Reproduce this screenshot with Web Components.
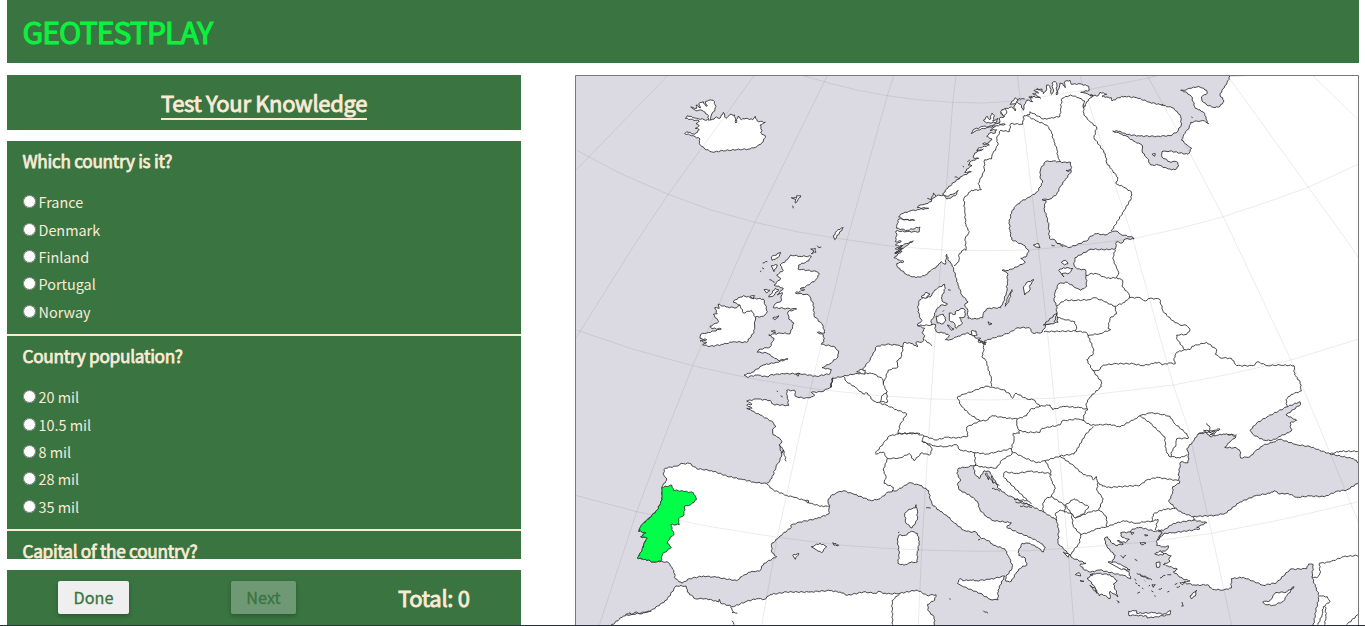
<!DOCTYPE html>
<html lang="en">
<head>
<meta charset="utf-8">
<title>GeoTestPlay</title>
<style>
html,body{margin:0;background:#fff}
body{height:626px;overflow:hidden;font-family:"Noto Sans CJK SC","Noto Sans",sans-serif;--green:#397441;--cream:#faebd7;color:#faebd7}
</style>
</head>
<body>
<geo-app></geo-app>
<script>
const define = (name, html, setup) => customElements.define(name, class extends HTMLElement {
  constructor() {
    super();
    this.attachShadow({ mode: 'open' }).innerHTML = html;
  }
  connectedCallback() { if (setup) setup(this, this.shadowRoot); }
});

define('geo-header', `<style>
:host{display:flex;align-items:center;height:63px;padding:0 15.5px;background:var(--green);box-sizing:border-box}
h1{margin:0;padding-bottom:2px;font-size:30.1px;line-height:40px;font-weight:400;letter-spacing:-.95px;color:#0bf13e;-webkit-text-stroke:1.1px #0bf13e}
</style><h1><slot></slot></h1>`);

define('geo-title', `<style>
:host{display:flex;justify-content:center;align-items:flex-start;height:55px;background:var(--green);box-sizing:border-box;padding-top:12px}
h2{margin:0;height:31px;line-height:30px;border-bottom:2px solid var(--cream);font-size:22px;letter-spacing:-.33px;font-weight:400;-webkit-text-stroke:.85px var(--cream);white-space:nowrap}
</style><h2><slot></slot></h2>`);

define('geo-option', `<style>
:host{display:block;height:27.4px}
label{display:flex;align-items:center;height:27.4px;font-size:14.4px;line-height:25px}
input{margin:0 3px 2px 0;width:13px;height:13px}
span{padding-bottom:2px}
</style><label><input type="radio"><span><slot></slot></span></label>`);

define('geo-question', `<style>
:host{display:block;box-sizing:border-box;height:195px;padding:6px 16px 0 15.5px;border-bottom:2px solid var(--cream)}
h3{margin:0 0 15px;font-size:17.2px;letter-spacing:-.27px;line-height:27px;font-weight:400;-webkit-text-stroke:.75px var(--cream);white-space:nowrap}
</style><h3></h3><slot></slot>`, (el, root) => { root.querySelector('h3').textContent = el.getAttribute('heading'); });

define('geo-button', `<style>
:host{display:block}
button{display:block;height:33px;padding:0 15px;border:0;border-radius:2px;background:#efefef;color:#397441;font:16.2px/33px "Noto Sans CJK SC",sans-serif;box-shadow:0 2px 4px rgba(0,0,0,.25);-webkit-text-stroke:.3px #397441;box-sizing:border-box;width:100%}
:host([disabled]) button{background:rgba(239,239,239,.3)}
</style><button><slot></slot></button>`);

define('geo-footer', `<style>
:host{display:grid;grid-template-columns:71px 65px auto;column-gap:102px;padding:11px 0 0 51px;height:55px;box-sizing:border-box;background:var(--green)}
strong{font-size:22px;letter-spacing:-.3px;line-height:33px;font-weight:400;-webkit-text-stroke:.85px var(--cream);white-space:nowrap}
</style><geo-button>Done</geo-button><geo-button disabled>Next</geo-button><strong><slot></slot></strong>`);

/* Map data. Capital letters pick a map sheet; coordinates are thirds of a pixel inside it. */
const SHEETS = { A:[570,65], B:[830,65], C:[1090,65], D:[570,245], E:[830,245], F:[1090,245], G:[570,430], H:[830,430], I:[1090,430] };

const MAINLAND = `C 420,32 410,58 398,72 390,90 402,108 390,124 375,128 350,120 336,108 334,96 352,84 350,76 330,66 310,66 290,74 272,76 290,82 304,94 316,130 330,134 344,146 348,162 356,176 344,168 320,168 302,172 298,186 285,205 274,225 292,240 305,250 294,268 270,264 240,258 216,260 216,276 238,290 260,290 267,302 255,314 235,312 205,300 182,300 172,280 158,264 156,240 130,228 110,214 90,206 68,198 90,199 108,208 150,213 200,214 240,212 262,200 274,180 272,155 262,140 246,128 215,120 180,112 140,98 105,94 85,98 66,108 64,98 50,96 36,94 50,88 30,82 25,92 0,92
B 790,92 762,84 752,82 778,76 776,64 750,56 724,58 720,46 706,48 702,54 706,68 698,56 690,54 686,72 680,90 680,54 676,50 666,54 670,80 664,88 660,64 650,60 648,78 640,86 636,72 612,76 626,84 608,86 628,96 632,100 612,94 598,96 608,110 590,106 582,120 580,136 572,118 562,112 552,122 556,138 545,126 530,130 516,134 512,146 524,154 508,160 510,172 496,184 480,196 500,194 496,204 478,204 470,214 486,222 476,234 458,236 478,240 444,250 440,258 460,252 434,264 430,278 446,280 424,288 414,300 426,302 410,312 404,322 424,320 396,334 372,352 350,372 338,388 350,394 372,386 384,376 380,388 366,396 350,402 340,390 320,392 308,400 304,410 288,416 270,420 262,428 296,430 262,434 240,438 216,446 206,456 224,464 254,466 206,462 202,476 200,490 232,496 270,486 268,500 228,500 198,498 200,512 196,530 214,528 196,540 208,544 250,528 226,544 206,560 196,566
E 216,2 196,12 218,10 194,24 216,18 192,38 204,44 222,50 200,56 204,68 232,90 258,98 284,92 304,76 324,62 334,50 346,58 350,28 356,48 366,58 376,90 384,120 396,150 414,170 404,180 412,192 414,220 440,222 458,218 462,200 474,190 512,188 520,170 530,140 532,110 532,84 516,76 536,76 560,66 586,52 572,40 588,36 596,20
B 596,556 580,540 562,532 545,524 540,500 538,470 545,440 556,424 575,408 600,396 622,380 638,352 630,335 632,312 646,290 670,288 700,292 722,292 724,318 706,344 690,366 680,388 660,402 636,404 648,406 642,430 650,456 656,480 658,520 676,526 684,536 700,540 714,548 740,540 775,524 780,514
C 20,506 45,510 62,502 78,498 92,508 130,518 132,522 106,522 96,534 80,530 76,552 F 40,14 0,12
E 780,14 735,38 732,60 742,72 766,74 768,90 770,124 752,136 740,130 712,112 686,116 676,140 672,165 680,184 680,214 664,236 648,238 642,252 632,264 608,264 598,248 564,248 540,262 520,270 462,288 468,298 444,290 452,280 440,280 428,270 410,264 380,276 360,284 346,284 358,272 344,264 322,262 314,250 316,238 304,240 304,226 312,214 318,196 332,180 350,180 352,176 336,168 336,154 346,130 344,118 322,130 312,140 300,156 276,160 266,170 264,190 268,214 276,226 262,240 272,244 284,250 276,262 284,272 278,290 258,292 262,306 248,296 222,292 218,304 198,300 170,298 140,304 128,330 116,350 98,372 104,384 76,386 40,394 8,400 2,428
D 788,398 782,426 756,440 724,442 734,450 720,458 704,460 676,454 674,436 650,436 652,456 656,482 610,478 600,466 560,462 530,468 546,478 530,480 546,490 530,490 546,498 570,510 604,528 618,544 608,552 610,570
G 624,22 636,34 628,44 640,60 630,90 618,110 606,145 594,158 578,160 550,156 515,148 470,138 425,122 380,116 358,100 330,102 322,108 286,114 280,130 290,150 276,170 276,210 262,240 240,262 214,286 206,304 226,302 238,296 228,308 212,320 232,324 222,340 216,362 202,384 226,388 250,396 274,394 296,398 306,412 314,432 316,446 336,460 358,446 400,438 440,442 500,452 520,436 546,424 568,424 582,400 620,380 606,368 604,344 630,318 664,292 662,286 690,276 740,266 776,252 778,232 774,210 782,198 800,188
H 40,182 70,192 124,212 150,206 175,186 200,182 238,158 270,166 296,182 300,206 306,222 330,244 350,256 370,276 400,300 420,306 438,306 450,322 476,332 490,346 524,356 536,380 546,402 546,416 528,440 528,454 544,454 560,426 578,408 590,406 586,384 566,376 566,362 576,340 600,340 622,352 640,366 646,352 628,336 600,322 560,306 530,292 544,278 490,272 468,258 450,240 442,214 420,196 388,180 382,164 392,150 380,130 386,114 410,112 438,104 430,112 436,134 448,146 462,122 480,126 488,142 498,158 506,176 530,194 552,204 600,226 640,246 680,270 686,300 684,340 700,356 728,384 768,400 752,402 750,406 764,420 782,426
I 30,420 70,430 100,436 122,446 116,424 90,412 66,396 76,376 60,362 46,342 44,324 52,320 62,336 76,346 100,342 82,332 106,338 118,328 96,322 92,308 120,306 126,298 150,292 172,298 196,304 220,304 206,322 202,330 200,346 220,350 236,348 230,360 214,366 244,378 236,388 240,394 220,404 234,408 262,418 250,426 264,436 280,448 300,452 280,458 318,466 352,464 368,478 400,480 424,474 424,446 460,442 520,466 560,458 600,418 650,416 656,402 670,404 666,440 676,470 688,498 678,540 670,588 810,588 C 810,28`;

const AFRICA = `G 122,588 160,558 240,544 290,510 318,468 348,468 352,486 376,506 410,506 446,516 448,508 452,520 490,530 530,514 560,506 584,508 600,494 650,486 720,486 770,482 H 0,482 30,486 52,496 100,486 140,490 144,484 170,492 210,490 262,480 290,496 318,494 314,510 292,524 296,544 312,560 314,588`;

const PORTUGAL = `G 276,172 306,166 310,180 340,184 370,188 380,208 362,224 344,228 342,256 326,266 328,284 302,284 312,314 300,322 292,340 304,352 278,372 272,394 250,396 226,388 202,384 216,362 222,340 232,324 212,320 228,308 206,304 214,286 240,262 262,240 276,210`;

const SEAS = `I 290,56 310,34 324,12 350,8 360,20 380,16 400,12 420,14 438,20 420,36 404,52 440,54 450,64 452,84 480,80 496,64 520,46 550,36 570,28 620,44 660,50 720,72 790,86 810,102 810,156 770,180 740,184 704,200 660,198 620,202 594,190 570,192 552,182 540,190 500,196 450,216 406,250 375,256 310,260 280,250 262,240 236,214 248,190 248,170 268,160 266,130 272,96 294,98 296,70
I 205,300 220,302 250,280 310,270 350,278 320,292 330,296 310,300 250,308 222,310 204,330 216,306
F 480,556 500,534 530,516 590,486 630,470 632,478 588,510 620,526 600,534 604,558 I 596,8 566,20 556,28 540,32 520,30 490,14
E 640,240 680,204 684,232 664,236
B 708,316 722,314 716,320`;

const ISLANDS = `A 362,126 380,130 378,120 392,128 386,116 400,110 408,124 412,122 406,110 416,106 430,106 438,124 434,138 428,142 424,150 422,166 440,156 450,160 460,142 468,160 480,148 494,150 498,174 504,154 514,164 528,160 548,164 556,154 562,168 586,172 570,180 576,196 572,204 586,212 580,230 562,244 540,252 500,254 450,258 430,262 404,252 388,236 390,222 370,212 344,206 350,200 374,208 388,194 376,190 388,182 378,176 388,168 346,160 352,152 380,160 402,164 418,166 412,148 396,136 376,136
D 662,30 690,34 724,34 716,48 686,60 684,72 740,80 748,88 736,106 708,124 690,132 704,134 676,144 716,150 730,176 732,212 758,240 764,264 742,262 760,270 762,290 754,298 790,304 806,318 804,336 780,356 756,368 784,374 780,386 740,394 690,386 640,386 600,390 594,396 560,390 530,396 522,390 546,382 580,360 620,352 654,342 624,346 610,336 590,324 562,322 566,314 600,306 612,280 596,270 630,264 660,266 672,234 656,222 654,200 680,192 640,190 610,188 616,176 632,170 636,142 622,150 640,130 612,120 632,100 620,90 640,76 630,60 652,44
D 444,178 468,186 500,188 510,180 490,172 496,164 520,152 550,160 580,162 586,180 592,200 580,214 556,216 554,240 552,262 530,292 490,290 460,298 420,304 398,300 410,292 390,288 410,284 390,280 392,268 410,264 454,252 424,250 420,244 446,230 430,208 442,206 434,188 448,190
H 258,224 262,240 262,270 246,294 228,280 224,250 236,238 256,234
H 206,316 226,316 244,304 262,310 268,334 262,370 262,396 240,398 222,406 204,400 208,370 202,330
H 382,460 390,446 398,452 420,450 440,452 480,448 524,438 504,480 504,510 480,508 450,490 400,470
E 358,204 376,208 376,200 396,190 406,196 404,216 388,218 398,234 378,250 374,236 358,226
E 318,214 340,208 348,226 340,236 322,234
E 352,240 372,252 364,256
E 580,126 590,112 612,104 600,120 600,134 584,150
E 546,134 536,170 526,184 532,160
E 686,76 700,68 728,70 718,84 696,86 702,96
E 694,52 706,46 714,56 704,60
E 474,230 486,236 478,240
E 424,258 438,258 442,270 426,272
E 274,156 288,142 300,148 286,160
E 106,376 90,374 80,380 104,388
I 116,544 140,542 140,550 190,548 222,552 242,542 240,554 200,560 172,564 170,558 140,556 116,556
I 518,516 540,512 556,488 590,486 612,470 590,498 580,514 550,526 526,524
I 300,498 320,480 316,498 304,506
I 54,396 76,396 100,408 120,420 90,416
I 194,372 212,362 222,372 206,376
I 198,398 210,396 208,412 200,412
I 150,338 168,340 154,344
I 122,306 132,308 126,314
I 164,314 174,316 166,318
I 0,434 20,430 60,434 82,452 70,462 84,500 60,484 60,506 36,492 28,498 18,478 0,466 H 800,490 794,470 772,444 790,434
G 724,350 750,340 770,350 754,368 740,360
G 788,338 806,346 792,346
G 668,376 686,370 676,388
A 664,398 680,400 680,392 692,392 684,404 676,414 678,404
B 10,512 24,494 40,488 28,504 14,524
D 722,12 736,10 738,22 724,26 732,18
D 604,36 632,22 624,38 606,46
D 604,62 622,60 612,80
D 582,134 600,136 590,144
D 596,156 616,130 626,134 608,154
D 608,220 626,212 616,224
D 604,258 614,256 616,264
D 540,154 554,152 550,162
D 678,388 688,386 684,394
B 424,206 430,194 460,184 476,186 500,176 526,178 500,182 470,188 440,196
B 460,166 472,154 480,164 486,144 494,152 488,168 504,160 500,172 470,174
B 540,118 556,98 566,104 556,116
B 512,140 526,130 530,144 520,152
B 610,540 626,536 630,548 618,546
H 700,366 718,374 714,382
H 736,434 748,428 752,438
H 750,452 762,454
C 186,268 196,266 194,274
I 270,458 284,456 276,464
I 186,464 196,464 190,472`;

const BORDERS = `B 788,92 770,110 766,124 760,128 764,108 745,98 722,90 696,100 692,130 690,154 660,160 640,162 600,140 598,150 582,152 578,178 542,176 538,200 512,196 500,220 504,240 486,270 484,282 464,284 462,320 444,356 454,374 424,376 402,400 404,440 408,484 418,500 406,520 408,556 E 404,12 388,26 386,50 372,62
B 590,152 620,168 650,180 664,200 672,230 680,250 684,276 692,290
B 760,118 762,150 780,170 C 20,186 12,218 46,266 50,294 64,312 84,338 78,356 100,366 124,380 124,400 104,434 64,498
F 76,14 68,40 80,70 86,82 80,98 98,106 96,124 116,146 118,158
E 768,92 780,86 F 20,86 50,100 80,98
E 680,182 704,166 740,166 780,164 F 14,158 40,168 74,184
F 74,184 104,172 118,158
F 74,184 80,206 60,220 54,250 62,254 30,266 0,270 E 774,272
E 682,218 700,222 734,230 740,250 736,258
E 642,260 736,258 768,262 774,272 790,310 790,326 770,344 788,376
F 8,376 34,410 34,425 0,456 E 768,476 772,492
F 8,376 26,376 40,360 80,356 130,356 156,362 190,356 206,352 216,360 236,354 256,356 252,340 260,322 284,314
F 118,158 150,158 166,168 180,160 208,162 220,200 246,226 270,240 288,240 300,254 290,268 260,270 262,284 284,314
F 284,314 300,314 306,304 350,292 380,314 376,328 390,338 424,340 440,362 490,362 504,350 530,362 570,360 612,362 614,390 630,410 634,438 604,448 588,464 592,486
E 462,296 460,320 456,334 470,350 474,370 484,400 484,424
E 382,456 400,448 430,438 466,424 486,426 520,434 540,448 548,460 558,444 590,462 610,464 630,484
E 382,456 394,484 420,508 450,528 470,526 486,512 520,518 562,522 590,512 600,494 630,484 660,480 668,494 700,484 750,488 774,494
E 562,522 560,540 568,556 590,562 630,562 636,550 690,540 696,528 740,522 758,526 766,500 774,494
E 450,528 410,546 412,568 H 414,18 380,24 350,22 318,30 282,18
E 758,526 780,540 F 20,540 60,538 90,546 134,522 150,512 180,504 206,506 240,514 252,534 290,566
F 150,512 180,534 216,568 I 224,20 228,60 236,78 270,84 292,74
I 290,10 296,24 260,26 258,44 244,66 242,80
I 36,168 60,172 150,166 170,150 200,142 266,152
E 790,544 766,570 H 740,60 732,72
H 690,78 732,108 760,134 786,140 790,150 I 20,140 22,156 38,168
I 24,158 20,180 40,206 26,240 40,250 50,264 50,290
I 50,290 80,280 100,272 140,280 170,274 186,274 190,252 220,238 256,236
I 186,274 204,268 196,300
I 50,290 20,296 0,306 H 752,314
H 706,226 732,206 776,230 760,252 736,264 724,250 706,226
H 680,270 676,250 690,240 704,246 724,250 730,290 752,314 748,340 726,366 720,376
H 736,264 780,246 I 26,240
H 640,246 638,220 652,202 664,200 706,226 704,246
H 604,222 560,180 520,140 524,126 560,130 600,124 658,130 664,150 676,176 664,200
H 646,92 660,118 664,136
H 546,64 580,82 620,98 646,92 690,78 732,72
H 436,106 434,68 470,72 500,66 544,56 546,72 516,90 500,114 460,112 436,106
H 434,68 390,60 380,44 350,50 316,48 290,40 276,34
H 544,56 552,30 550,10 568,10 568,0
H 136,70 160,40 178,18 204,12 256,10 282,18 276,34 300,46 306,60 298,76 276,68 252,92 238,70 220,80 206,84 172,86 160,66 136,72
H 172,86 160,120 168,140 162,160 190,172 186,184
E 168,480 200,494 230,506 210,540 204,566 240,564 270,566
E 204,566 H 204,12
E 40,394 50,410 80,430 98,446 112,444 130,468 168,480
E 104,384 130,386 158,402 160,420 172,440 158,450 150,470 172,472 170,440
E 220,304 212,340 200,348 204,366 174,376 166,400 160,416
E 262,242 304,240
E 284,284 306,302
G 590,162 610,180 650,196 672,202 700,210 720,220 760,230 778,228
G 706,212 716,212 714,220
I 720,72 750,64 808,64
I 666,440 680,444 690,430 688,400 720,396 760,380 808,376
I 690,498 712,500 720,514 700,530 696,556 684,584
I 706,530 708,560 704,584
I 770,584 806,552
D 510,180 520,204 544,196 556,216
H 210,490 186,512 188,584
G 480,530 490,545 486,548 502,550
G 486,572 492,584
F 350,535 360,548 355,560 372,556 390,552 370,566 350,556 325,568
F 414,568 440,570
I 340,0 350,8 376,4 360,14 374,14
I 310,260 312,272
H 552,208 590,212
H 556,216 600,224
H 570,228 606,232
H 486,176 500,178 510,184
H 466,130 476,150 470,128
H 478,140 490,160 484,138
H 486,154 508,166
H 288,234 302,234
H 460,542 474,550
H 358,506 362,508
H 204,308 208,306
H 444,330 450,328
G 628,44 634,70 640,60 648,94
G 166,554 180,548 184,554 200,546 210,552 226,546 244,544
D 620,438 624,440
D 632,452 638,456
D 578,54 592,50
D 576,68 582,72
D 598,104 614,112
D 742,2 746,8 754,6
D 570,78 574,80
A 668,422 670,430
B 412,290 420,284
B 398,304 402,306
B 374,336 390,340
B 292,400 304,404 310,384 318,394
B 566,100 584,102
B 596,96 608,98
B 620,70 636,80
B 664,540 674,542
B 678,532 700,544
C 214,120 220,118
C 304,156 308,158
E 354,134 362,136
E 338,200 342,196
E 444,282 464,296
E 450,290 470,292
E 672,232 682,206
I 92,376 100,384 108,376
I 134,388 142,392
I 140,430 176,444
I 150,436 186,450
I 134,446 138,452
I 164,452 166,454
I 136,458 142,462
I 144,466 150,468
I 176,468 180,466
I 184,482 190,486
I 142,490 150,486
I 194,496 196,500
I 206,478 216,474
I 232,486 238,484
I 210,444 226,436
I 232,434 244,434
I 254,464 262,460
I 260,472 270,468
I 276,516 280,528 274,528
I 80,512 88,516 84,520
I 156,474 160,476`;

const GRATICULE = `A 293,32 17,316
A 552,32 295,388 D 193,0 17,280
A 772,32 555,472 D 523,0 368,362 G 292,0 200,245 88,586
B 191,32 172,92 40,565 D 722,430 G 692,0 622,322 575,586
B 378,32 368,115 335,555 E 315,280 H 297,0 275,360 265,586
B 562,32 582,190 625,545 E 650,240 H 682,0 715,370 732,586
B 750,32 C 0,125 45,270 125,510 F 250,420 I 296,0 365,310 425,586
C 172,32 300,265 400,455 F 440,0 603,345 I 692,0 780,215 806,278
C 420,42 655,367 F 780,0 806,40
C 668,32 806,165
A 700,32 B 0,55 80,75 172,92 260,104 368,112 460,114 560,108 700,85 C 0,73 172,40 200,32
A 20,256 150,325 295,388 420,434 555,472 680,500 B 20,520 180,543 340,555 470,557 600,555 780,537 C 135,520 270,490 400,455 530,412 655,367 806,297
D 20,255 190,313 368,362 540,400 722,430 E 0,437 150,452 300,462 480,465 670,460 F 0,450 250,420 430,385 603,345 806,282
G 17,196 200,245 410,288 622,322 H 30,345 150,354 275,360 440,364 600,362 I 0,350 180,335 365,310 580,268 806,215`;

/* Turns one line of data into an SVG path; edges get a small deterministic wobble. */
function trace(line, closed, bend) {
  let sheet, last, d = '';
  for (const t of line.trim().split(/\s+/)) {
    if (SHEETS[t]) { sheet = SHEETS[t]; continue; }
    const [a, b] = t.split(',').map(Number);
    const x = sheet[0] + a / 3, y = sheet[1] + b / 3;
    if (!last) d += 'M';
    else {
      const dx = x - last[0], dy = y - last[1], len = Math.hypot(dx, dy);
      if (bend && len > 3 && len < 40) {
        const n = Math.max(2, Math.round(len / 1.8));
        for (let i = 1; i < n; i++) {
          const s = Math.sin(x * 12.9 + y * 78.2 + i * 2.1) * 0.6;
          d += `L${(last[0] + dx * i / n - dy / len * s).toFixed(1)} ${(last[1] + dy * i / n + dx / len * s).toFixed(1)}`;
        }
      }
      d += 'L';
    }
    d += x.toFixed(1) + ' ' + y.toFixed(1);
    last = [x, y];
  }
  return d + (closed ? 'Z' : '');
}
const lines = (text, closed, bend = true) => text.split('\n').map(l => trace(l, closed, bend)).join('');

define('geo-map', `<style>
:host{display:block;height:551px;background:#dbdae2}
svg{display:block;width:784px;height:551px}
path{stroke:#333335;stroke-width:.9;stroke-linejoin:round;fill:none}
.land{fill:#fff}.sea{fill:#dbdae2}.pick{fill:#00ff48}.grid{stroke:#000;stroke-opacity:.09;stroke-width:.9}
</style><svg viewBox="575 75 784 551"></svg>`, (el, root) => {
  const put = (cls, d) => `<path class="${cls}" d="${d}"/>`;
  root.querySelector('svg').innerHTML =
    put('land', trace(MAINLAND.replace(/\n/g, ' '), true, true)) + put('land', trace(AFRICA, true, true)) +
    put('sea', lines(SEAS, true)) + put('land', lines(ISLANDS, true)) + put('line', lines(BORDERS, false)) +
    put('grid', lines(GRATICULE, false, false)) + put('pick', trace(PORTUGAL, true, true)) +
    '<path d="M575.5 626V75.5H1358.5V626" style="stroke:#77777c;stroke-width:1"/>';
});

define('geo-app', `<style>
:host{display:block;height:625px;padding:0 6px 0 7px;border-bottom:1px solid #22333b;box-sizing:content-box;overflow:hidden}
main{display:grid;grid-template-columns:514px 784px;column-gap:54px;margin-top:12px;height:550px}
.panel{display:flex;flex-direction:column;gap:11px}
.quiz{height:418px;overflow:hidden;background:var(--green)}
geo-map{height:550px;overflow:hidden}
</style>
<geo-header>GEOTESTPLAY</geo-header>
<main>
<section class="panel">
<geo-title>Test Your Knowledge</geo-title>
<div class="quiz">
<geo-question heading="Which country is it?"><geo-option>France</geo-option><geo-option>Denmark</geo-option><geo-option>Finland</geo-option><geo-option>Portugal</geo-option><geo-option>Norway</geo-option></geo-question>
<geo-question heading="Country population?"><geo-option>20 mil</geo-option><geo-option>10.5 mil</geo-option><geo-option>8 mil</geo-option><geo-option>28 mil</geo-option><geo-option>35 mil</geo-option></geo-question>
<geo-question heading="Capital of the country?"></geo-question>
</div>
<geo-footer>Total: 0</geo-footer>
</section>
<geo-map></geo-map>
</main>`);
</script>
</body>
</html>
